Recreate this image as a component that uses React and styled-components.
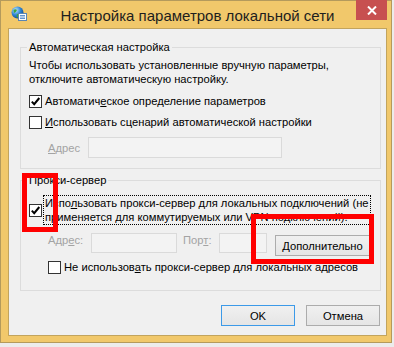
import React from "react";
import styled, { createGlobalStyle } from "styled-components";

const GlobalStyle = createGlobalStyle`
  html, body {
    margin: 0;
    padding: 0;
    background: #ececec;
  }
  body {
    width: 394px;
    height: 347px;
    overflow: hidden;
    font-family: "Liberation Sans", Arial, sans-serif;
    font-size: 11.2px;
    color: #000;
  }
`;

const Window = styled.div`
  position: relative;
  box-sizing: border-box;
  width: 392px;
  height: 343px;
  border: 1px solid #b49a5c;
  background: #f1c86b;
  padding: 0 4px 6px 7px;
  display: flex;
  flex-direction: column;
`;

const TitleBar = styled.div`
  height: 27px;
  display: grid;
  grid-template-columns: 1fr auto 1fr;
  align-items: start;
`;

const AppIcon = styled.svg`
  margin: 5px 0 0 3px;
  width: 16px;
  height: 16px;
`;

const Title = styled.div`
  font-size: 15px;
  line-height: 18px;
  margin-top: 6px;
  color: #1e1e1e;
  white-space: nowrap;
`;

const CloseButton = styled.div`
  justify-self: end;
  margin-top: -1px;
  width: 31px;
  height: 20px;
  background: #c75050;
  display: flex;
  align-items: center;
  justify-content: center;
`;

const Client = styled.div`
  flex: 1;
  border: 1px solid #c2a45d;
  background: #f0f0f0;
  display: flex;
  flex-direction: column;
`;

const Group = styled.fieldset`
  margin: ${(p) => p.$top}px 5px 0 11px;
  padding: 0 9px ${(p) => p.$bottom}px 8px;
  border: 1px solid #dcdcdc;
  min-width: 0;
`;

const Legend = styled.legend`
  padding: 0 2px;
  margin-left: -2px;
  line-height: 14px;
`;

const Note = styled.p`
  margin: 4px 0 0;
  line-height: 14px;
  white-space: nowrap;
`;

const Row = styled.div`
  display: flex;
  align-items: ${(p) => (p.$start ? "flex-start" : "center")};
  margin-top: ${(p) => p.$top}px;
  padding-left: ${(p) => p.$indent || 0}px;
  line-height: 14px;
  white-space: nowrap;
`;

const Box = styled.span`
  box-sizing: border-box;
  flex: none;
  width: 13px;
  height: 13px;
  border: 1px solid #333;
  background: #fff;
  margin-right: ${(p) => p.$gap || 3}px;
  display: flex;
  align-items: center;
  justify-content: center;
`;

const FocusLabel = styled.span`
  flex: 1;
  border: 1px dotted #000;
  padding-left: 1px;
  line-height: 14px;
`;

const Dim = styled.span`
  color: #a3a3a3;
  width: ${(p) => p.$w}px;
  flex: none;
`;

const Field = styled.span`
  box-sizing: border-box;
  flex: none;
  width: ${(p) => p.$w}px;
  height: ${(p) => p.$h}px;
  margin-right: ${(p) => p.$gap || 0}px;
  border: 1px solid #dadada;
  background: #f3f3f3;
`;

const Button = styled.div`
  box-sizing: border-box;
  flex: none;
  width: ${(p) => p.$w}px;
  height: 21px;
  margin-top: ${(p) => p.$top || 0}px;
  border: 1px solid ${(p) => (p.$default ? "#3c9ae8" : "#acacac")};
  background: linear-gradient(#f0f0f0, #e5e5e5);
  display: flex;
  align-items: center;
  justify-content: center;
  line-height: 14px;
`;

const Footer = styled.div`
  display: flex;
  justify-content: flex-end;
  gap: 11px;
  margin: 14px 6px 0 0;
`;

const Highlight = styled.div`
  position: absolute;
  box-sizing: border-box;
  border: 5px solid #f00;
  pointer-events: none;
`;

const Check = () => (
  <svg width="11" height="11" viewBox="0 0 11 11">
    <path d="M1.8 5.6 L4.2 8.2 L9.3 2" fill="none" stroke="#000" strokeWidth="2" />
  </svg>
);

const Globe = () => (
  <AppIcon viewBox="0 0 16 16">
    <defs>
      <radialGradient id="g" cx="0.35" cy="0.3" r="0.8">
        <stop offset="0" stopColor="#bfe6ff" />
        <stop offset="0.5" stopColor="#2f86d6" />
        <stop offset="1" stopColor="#12407e" />
      </radialGradient>
    </defs>
    <circle cx="6.5" cy="6.5" r="6" fill="url(#g)" />
    <path d="M2.5 4 Q4.5 2.5 6 4 Q5 6.5 3 7 Z M6 8 Q8.5 7.5 9 10 Q7 12 5.5 11 Z" fill="#3fa63a" />
    <rect x="7.5" y="7.5" width="8" height="7" fill="#fff" stroke="#5a86b4" strokeWidth="1" />
    <path d="M9 9.5 H14 M9 11 H14 M9 12.5 H14" stroke="#3b78c4" strokeWidth="0.8" />
  </AppIcon>
);

export default function App() {
  return (
    <>
      <GlobalStyle />
      <Window>
        <TitleBar>
          <Globe />
          <Title>Настройка параметров локальной сети</Title>
          <CloseButton>
            <svg width="10" height="9" viewBox="0 0 10 9">
              <path d="M1 0.5 L9 8.5 M9 0.5 L1 8.5" stroke="#fff" strokeWidth="2" />
            </svg>
          </CloseButton>
        </TitleBar>
        <Client>
          <Group $top={11} $bottom={10}>
            <Legend>Автоматическая настройка</Legend>
            <Note>
              Чтобы использовать установленные вручную параметры,
              <br />
              отключите автоматическую настройку.
            </Note>
            <Row $top={8}>
              <Box><Check /></Box>
              <span>Автоматич<u>е</u>ское определение параметров</span>
            </Row>
            <Row $top={7}>
              <Box />
              <span><u>И</u>спользовать сценарий автоматической настройки</span>
            </Row>
            <Row $top={8} $indent={19}>
              <Dim $w={40}><u>А</u>дрес</Dim>
              <Field $w={194} $h={21} />
            </Row>
          </Group>
          <Group $top={4} $bottom={16}>
            <Legend>Прокси-сервер</Legend>
            <Row $top={8}>
              <Box $gap={1}><Check /></Box>
              <FocusLabel>
                Испо<u>л</u>ьзовать прокси-сервер для локальных подключений (не
                <br />
                применяется для коммутируемых или VPN подключений).
              </FocusLabel>
            </Row>
            <Row $top={8} $indent={19} $start>
              <Dim $w={43}>Адр<u>е</u>с:</Dim>
              <Field $w={86} $h={20} $gap={6} />
              <Dim $w={36}>Пор<u>т</u>:</Dim>
              <Field $w={48} $h={20} $gap={8} />
              <Button $w={95} $top={2}><span><u>Д</u>ополнительно</span></Button>
            </Row>
            <Row $top={4} $indent={19}>
              <Box />
              <span>Не использов<u>а</u>ть прокси-сервер для локальных адресов</span>
            </Row>
          </Group>
          <Footer>
            <Button $w={74} $default>OK</Button>
            <Button $w={74}>Отмена</Button>
          </Footer>
        </Client>
        <Highlight style={{ left: 21, top: 172, width: 36, height: 59 }} />
        <Highlight style={{ left: 250, top: 213, width: 123, height: 50 }} />
      </Window>
    </>
  );
}
